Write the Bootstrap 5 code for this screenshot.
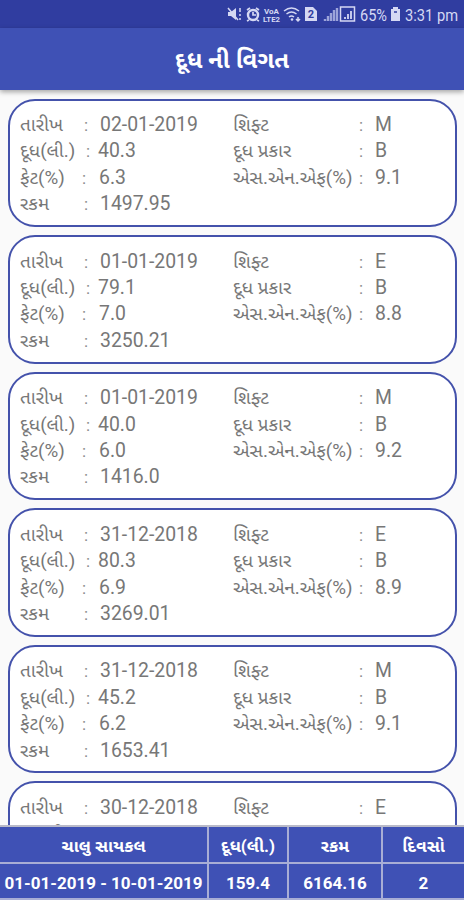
<!DOCTYPE html>
<html lang="gu">
<head>
<meta charset="utf-8">
<meta name="viewport" content="width=device-width, initial-scale=1">
<title>દૂધ ની વિગત</title>
<link rel="stylesheet" href="https://cdn.jsdelivr.net/npm/bootstrap@5.3.0/dist/css/bootstrap.min.css">
<style>
body{font-family:Roboto,"Noto Sans Gujarati","Noto Sans",sans-serif;background:#fafafa;height:900px;color:#777}
.status{height:28px;background:#303da0;padding-right:5px}
.status svg{display:block;flex:none}
.title-bar{height:62px;background:#3f51b5;color:#fff;font-size:23.8px;padding-top:3px;box-shadow:0 2px 5px rgba(0,0,0,.35);z-index:2}
.entries{min-height:0;padding:8.5px 7px 0 8px;gap:8px}
.entry{flex:none;height:128.6px;border:2px solid #4452ab;border-radius:27px;background:#fff;padding:11.5px 0 0 10px;font-size:19.4px}
.pair{height:26.4px;line-height:26.4px;white-space:nowrap}
.left-side{width:213px}
.tag{font-size:18.8px}
.left-side .tag{width:64px}
.left-side .milk .tag{width:66px}
.left-side .fat .tag{width:62px}
.right-side .tag{width:126px}
.sep{width:16px;font-size:17px;color:#8a8a8a}
.left-side .milk .sep{width:12px}
.left-side .fat .sep{width:17px}
.totals{height:75px;background:#3f51b5;color:#fff;font-weight:700;font-size:17px;border-top:2px solid #b9bac9;display:grid;grid-template-columns:209px 80px 94px 1fr;grid-template-rows:37px 36px;z-index:2}
.totals>div{border-right:2px solid #a9aed5;border-bottom:2px solid #a9aed5;white-space:nowrap;padding-top:3px;line-height:24px}
.totals>div:nth-child(4n){border-right:0}
.totals .head{font-size:17.2px}
</style>
<script src="https://cdn.jsdelivr.net/npm/bootstrap@5.3.0/dist/js/bootstrap.bundle.min.js"></script>
</head>
<body class="d-flex flex-column overflow-hidden m-0">
<header class="status d-flex justify-content-end align-items-center flex-shrink-0">
<svg width="176" height="28" viewBox="224 0 176 28" fill="none" stroke="#d5d8f3" stroke-width="1.5">
<path d="M228 12h3l5-4v12l-5-4h-3z" fill="#d5d8f3" stroke="none"/><path d="M228 8l10 12M240 8v4M240 14v2M240 18v2"/>
<circle cx="253" cy="15" r="5" stroke-width="2.4"/><path d="M253 12v3h3M247 10l3-2M259 10l-3-2M249 20l-2 1M257 20l2 1" stroke-width="1.7"/>
<g fill="#d5d8f3" stroke="none" font-family="Roboto" font-weight="700"><text x="264" y="13.500" font-size="7.500" textLength="15" lengthAdjust="spacingAndGlyphs">VoA</text><text x="263" y="21.500" font-size="7.500" textLength="17" lengthAdjust="spacingAndGlyphs">LTE2</text></g>
<path d="M284 11q7.500-6 15 0M286.500 14q5-4 10 0M289 17q2.500-2 5 0M298 17v4M296 19l2 2 2-2"/><circle cx="292" cy="19.500" r="1.300" fill="#d5d8f3" stroke="none"/>
<path d="M305 7h8l4 4v10h-12z" fill="#d5d8f3" stroke="none"/><text x="311" y="18" text-anchor="middle" font-size="11" font-weight="700" font-family="Roboto" fill="#303da0" stroke="none">2</text>
<path d="M325 21v-2M328 21v-5M331 21v-8M334 21v-11M337 21v-13" stroke="#9da4da" stroke-width="2.400"/>
<rect x="340.500" y="7" width="14" height="14"/><path d="M345 19v-2M348 19v-5M351 19v-8" stroke-width="1.800"/>
<text x="360" y="20.500" font-size="17" font-family="Roboto" fill="#d5d8f3" stroke="none" textLength="27" lengthAdjust="spacingAndGlyphs">65%</text>
<path d="M391 9h2V7h5v2h2v12h-9z" fill="#d5d8f3" stroke="none"/><path d="M394 12h3" stroke="#303da0"/>
</svg>
<svg width="59" height="28"><text x="5" y="20.5" font-size="17" font-family="Roboto" fill="#d5d8f3" textLength="53" lengthAdjust="spacingAndGlyphs">3:31 pm</text></svg>
</header>
<h1 class="title-bar d-flex align-items-center justify-content-center fw-bold m-0 flex-shrink-0 position-relative">દૂધ ની વિગત</h1>
<main class="entries d-flex flex-column flex-grow-1 overflow-hidden" id="entries"></main>
<footer class="totals flex-shrink-0 text-center position-relative">
<div class="head d-flex align-items-center justify-content-center">ચાલુ સાયકલ</div><div class="head d-flex align-items-center justify-content-center">દૂધ(લી.)</div><div class="head d-flex align-items-center justify-content-center">રકમ</div><div class="head d-flex align-items-center justify-content-center">દિવસો</div>
<div class="d-flex align-items-center justify-content-center">01-01-2019 - 10-01-2019</div><div class="d-flex align-items-center justify-content-center">159.4</div><div class="d-flex align-items-center justify-content-center">6164.16</div><div class="d-flex align-items-center justify-content-center">2</div>
</footer>
<script>
const rows=[['02-01-2019','40.3','6.3','1497.95','M','9.1'],['01-01-2019','79.1','7.0','3250.21','E','8.8'],['01-01-2019','40.0','6.0','1416.0','M','9.2'],['31-12-2018','80.3','6.9','3269.01','E','8.9'],['31-12-2018','45.2','6.2','1653.41','M','9.1'],['30-12-2018',null,null,null,'E',null]];
const pair=(label,value,kind='')=>`<div class="pair d-flex ${kind}"><span class="tag">${label}</span><span class="sep">:</span><span>${value}</span></div>`;
const entry=([date,milk,fat,sum,shift,snf])=>{
  const left=pair('તારીખ',date)+(milk?pair('દૂધ(લી.)',milk,'milk')+pair('ફેટ(%)',fat,'fat')+pair('રકમ',sum):'<div class="pair"><span class="tag">દૂધ(લી.)</span></div>');
  const right=pair('શિફ્ટ',shift)+(milk?pair('દૂધ પ્રકાર','B')+pair('એસ.એન.એફ(%)',snf):'');
  return `<article class="entry d-flex"><div class="left-side">${left}</div><div class="right-side">${right}</div></article>`;
};
document.getElementById('entries').innerHTML=rows.map(entry).join('');
</script>
</body>
</html>
